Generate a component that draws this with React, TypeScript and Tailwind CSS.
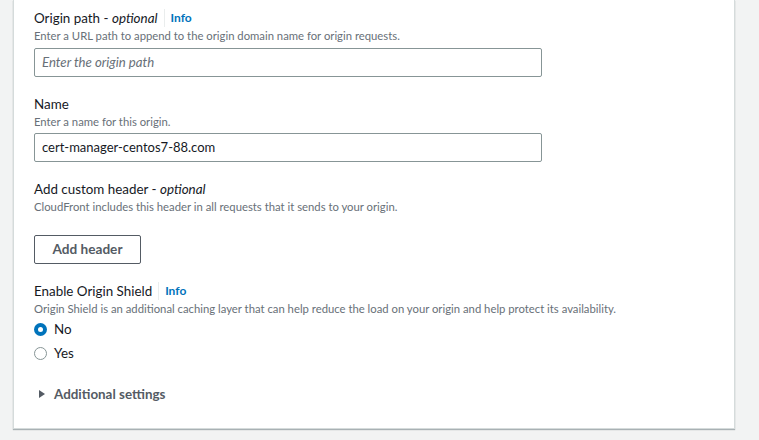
const font = {fontFamily: 'Lato, "Open Sans", Arial, sans-serif'}

function Info() {
    return (
        <>
            <span className="mx-[6px] inline-block h-[18px] w-px bg-[#eaeded] align-middle"/>
            <span className="text-[12px] font-bold text-[#0073bb]">Info</span>
        </>
    )
}

function Field({label, optional, info, desc, children}: {label: string, optional?: boolean, info?: boolean, desc: string, children?: React.ReactNode}) {
    return (
        <div className="flex flex-col">
            <div className="flex items-center text-[13.4px] leading-[20px] text-[#16191f]">
                <span>{label}{optional && <> - <i>optional</i></>}</span>
                {info && <Info/>}
            </div>
            <div className="text-[11.3px] leading-[16px] text-[#687078]">{desc}</div>
            {children}
        </div>
    )
}

export default function App() {
    return (
        <div className="h-[440px] w-[759px] overflow-hidden bg-[#f2f3f3]" style={font}>
            <div className="ml-[13px] w-[722px] border-x border-b border-[#d5dbdb] bg-white pb-[24px] pl-[20px] pt-[8px] shadow-[0_1px_1px_0_rgba(0,28,36,0.3)]">
                <Field label="Origin path" optional info desc="Enter a URL path to append to the origin domain name for origin requests.">
                    <div className="mt-[4px] flex h-[29px] w-[508px] items-center rounded-[2px] border border-[#879596] px-[7px] text-[13.2px] italic text-[#687078]">
                        Enter the origin path
                    </div>
                </Field>
                <div className="mt-[17px]">
                    <Field label="Name" desc="Enter a name for this origin.">
                        <div className="mt-[3px] flex h-[29px] w-[508px] items-center rounded-[2px] border border-[#879596] px-[7px] text-[13px] text-[#16191f]">
                            cert-manager-centos7-88.com
                        </div>
                    </Field>
                </div>
                <div className="mt-[17px]">
                    <Field label="Add custom header" optional desc="CloudFront includes this header in all requests that it sends to your origin."/>
                </div>
                <button className="mt-[20px] flex h-[29px] w-[107px] items-center justify-center rounded-[2px] border border-[#545b64] text-[13.6px] font-bold text-[#545b64]">
                    Add header
                </button>
                <div className="mt-[17px]">
                    <Field label="Enable Origin Shield" info desc="Origin Shield is an additional caching layer that can help reduce the load on your origin and help protect its availability.">
                        <div className="mt-[2px] flex flex-col gap-[4px] text-[13.4px] text-[#16191f]">
                            <label className="flex h-[20px] items-center gap-[7px]">
                                <span className="flex h-[13px] w-[13px] items-center justify-center rounded-full bg-[#0073bb]">
                                    <span className="h-[5px] w-[5px] rounded-full bg-white"/>
                                </span>
                                No
                            </label>
                            <label className="flex h-[20px] items-center gap-[7px]">
                                <span className="h-[13px] w-[13px] rounded-full border border-[#879596]"/>
                                Yes
                            </label>
                        </div>
                    </Field>
                </div>
                <div className="mt-[21px] flex items-center gap-[8px] pl-[4px] text-[13.4px] font-bold text-[#545b64]">
                    <svg width="8" height="10" viewBox="0 0 8 10"><path d="M1 1 L7 5 L1 9 Z" fill="#545b64"/></svg>
                    Additional settings
                </div>
            </div>
        </div>
    )
}
